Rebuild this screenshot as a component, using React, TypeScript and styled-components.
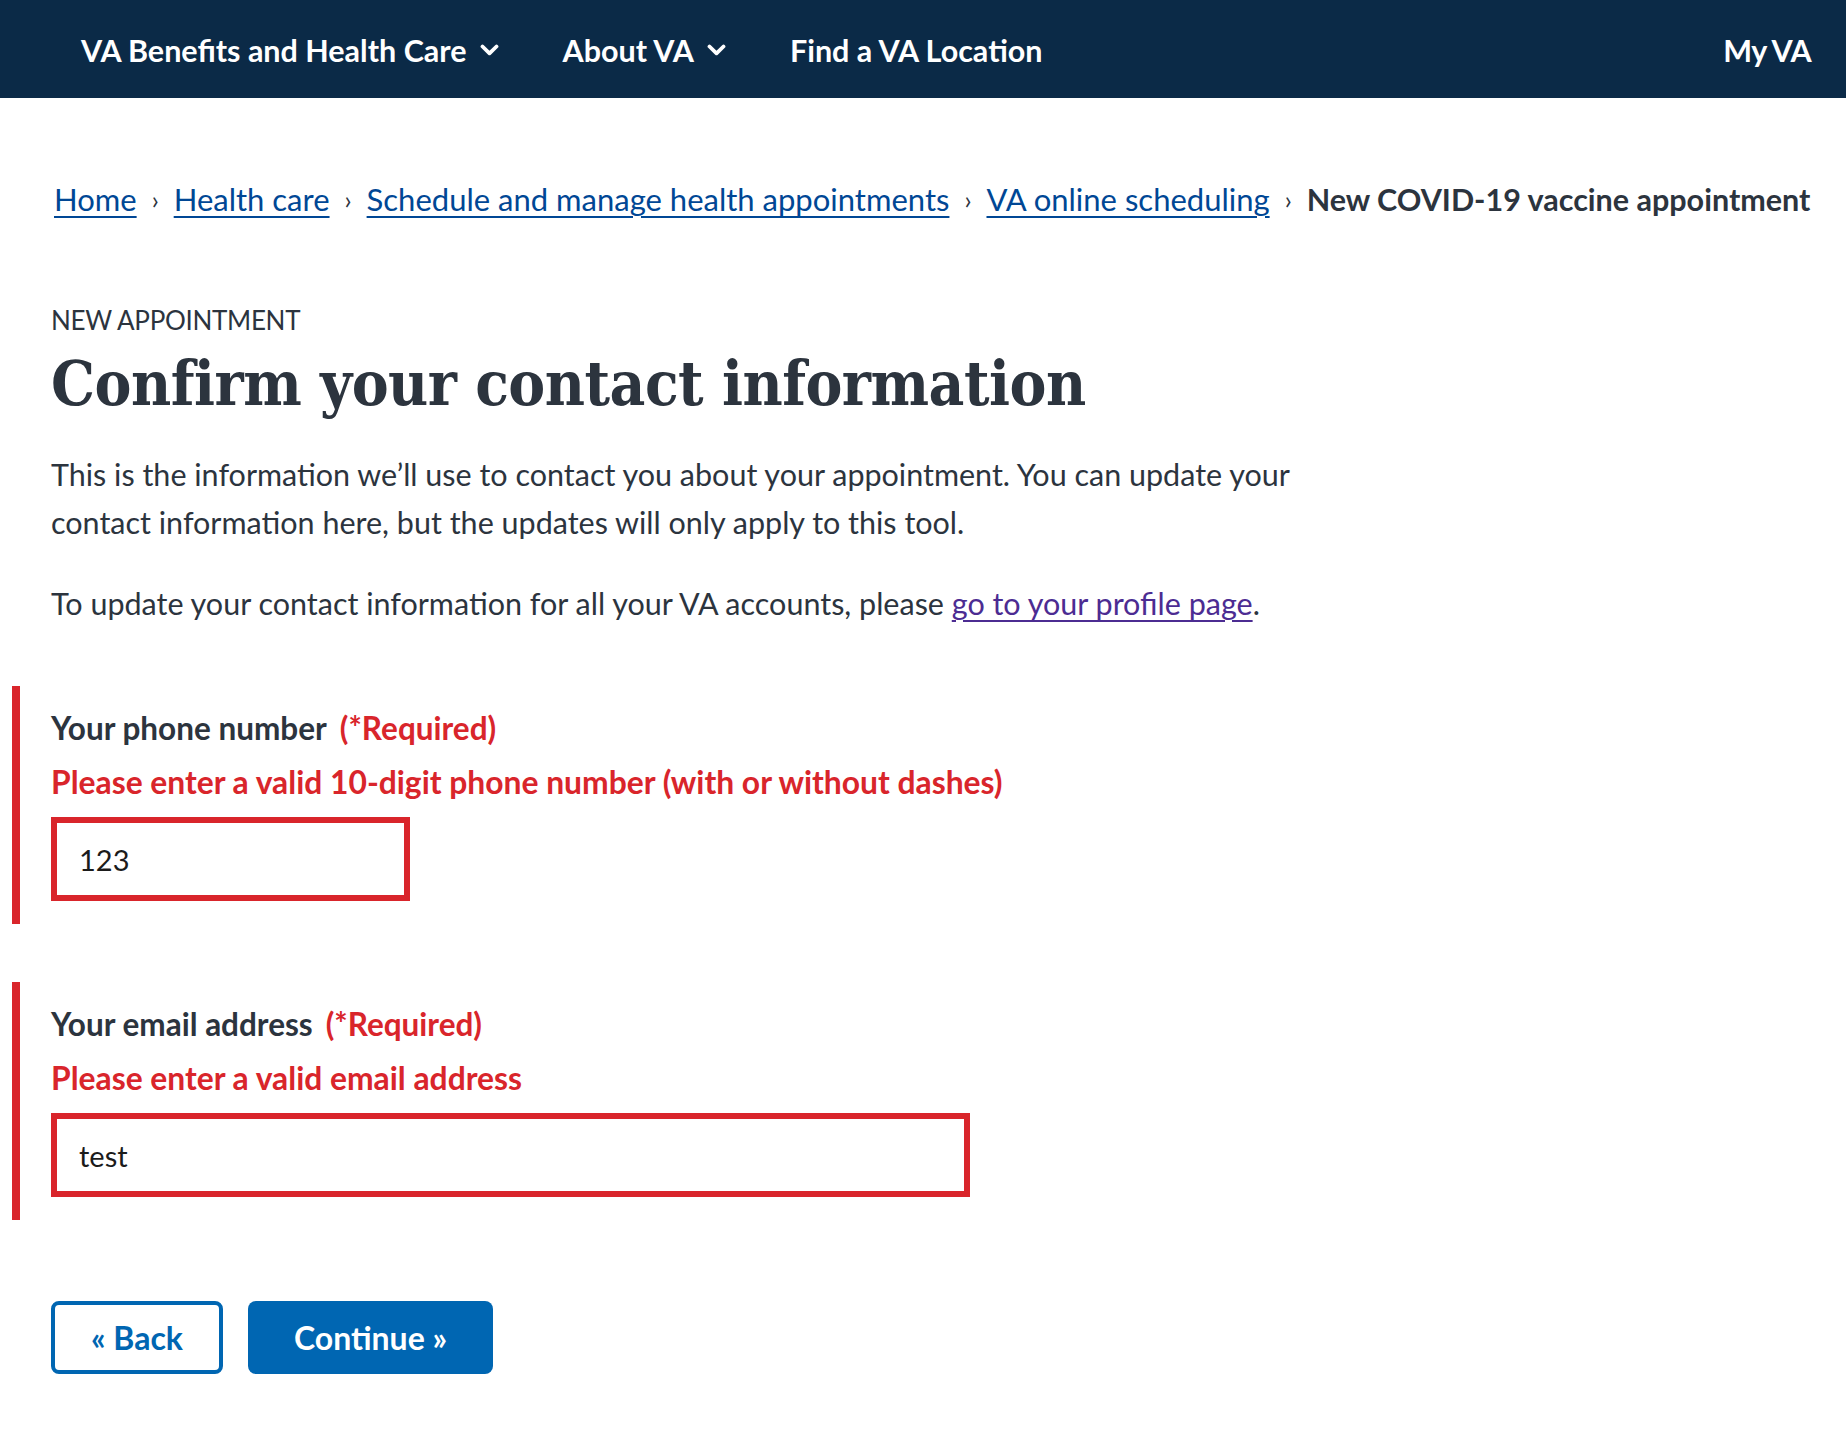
import React from "react";
import styled, { createGlobalStyle } from "styled-components";

const Global = createGlobalStyle`
  html, body { margin: 0; padding: 0; background: #fff; }
  body { font-family: "Lato", "Open Sans", sans-serif; color: #2c343e; }
  * { box-sizing: border-box; }
`;

const Header = styled.header`
  height: 98px;
  background: #0b2a47;
  display: flex;
  align-items: center;
  justify-content: space-between;
  padding: 2px 35px 0 81px;
`;

const Nav = styled.nav`
  display: flex;
  align-items: center;
  gap: 64px;
`;

const NavItem = styled.span<{ $tight?: boolean }>`
  display: inline-flex;
  align-items: center;
  gap: 13px;
  color: #fff;
  font-weight: 700;
  font-size: 30.5px;
  letter-spacing: ${(p) => (p.$tight ? "-0.6px" : "0")};
  white-space: nowrap;
`;

const Chevron = () => (
  <svg width="19" height="12" viewBox="0 0 19 12" aria-hidden="true">
    <path d="M2.5 2.5 L9.5 9.3 L16.5 2.5" fill="none" stroke="#fff" strokeWidth="3.8" strokeLinecap="round" strokeLinejoin="round" />
  </svg>
);

const Main = styled.main`
  padding: 0 51px;
`;

const Breadcrumbs = styled.ol`
  list-style: none;
  margin: 77px 0 0 3px;
  padding: 0;
  display: flex;
  align-items: center;
  font-size: 31px;
  line-height: 48px;
  white-space: nowrap;
`;

const Crumb = styled.li`
  display: inline-flex;
  align-items: center;
`;

const Sep = styled.span`
  color: #2c343e;
  font-size: 25px;
  padding: 0 15px;
`;

const CrumbLink = styled.a`
  color: #004795;
  text-decoration: underline;
  text-underline-offset: 5px;
  text-decoration-thickness: 2px;
`;

const Current = styled.span`
  font-weight: 700;
  font-size: 30.5px;
  color: #2c343e;
`;

const Eyebrow = styled.div`
  margin-top: 77px;
  font-size: 26px;
  line-height: 40px;
  color: #2c343e;
  letter-spacing: -0.3px;
`;

const Title = styled.h1`
  margin: 4px 0 0;
  font-family: "DejaVu Serif", serif;
  font-stretch: condensed;
  font-weight: 700;
  font-size: 61.5px;
  line-height: 80px;
  color: #2c343e;
  letter-spacing: -0.5px;
`;

const Para = styled.p<{ $top: number }>`
  margin: ${(p) => p.$top}px 0 0;
  font-size: 30.5px;
  line-height: 48px;
  max-width: 1300px;
`;

const ProfileLink = styled.a`
  color: #4c2c92;
  text-decoration: underline;
  text-underline-offset: 5px;
  text-decoration-thickness: 2px;
`;

const FieldBlock = styled.div<{ $top: number }>`
  margin: ${(p) => p.$top}px 0 0 -39px;
  border-left: 8px solid #d9252b;
  padding: 22px 0 23px 31px;
  display: flex;
  flex-direction: column;
  align-items: flex-start;
`;

const Label = styled.label`
  font-weight: 700;
  font-size: 31.5px;
  line-height: 40px;
  color: #2c343e;
`;

const Required = styled.span`
  color: #d9252b;
  margin-left: 13px;
`;

const ErrorText = styled.div`
  margin-top: 14px;
  font-weight: 700;
  font-size: 31.8px;
  line-height: 40px;
  color: #d9252b;
`;

const Input = styled.input<{ $w: number }>`
  margin-top: 15px;
  width: ${(p) => p.$w}px;
  height: 84px;
  border: 6px solid #d9252b;
  padding: 0 22px;
  font-family: "Lato", sans-serif;
  font-size: 29px;
  color: #1b1b1b;
  background: #fff;
  outline: none;
`;

const Buttons = styled.div`
  margin-top: 81px;
  display: flex;
  gap: 25px;
  padding-bottom: 40px;
`;

const Button = styled.button<{ $primary?: boolean }>`
  height: 73px;
  padding: 0 ${(p) => (p.$primary ? 46 : 36)}px;
  border-radius: 8px;
  font-family: "Lato", sans-serif;
  font-weight: 700;
  font-size: 32px;
  cursor: pointer;
  border: ${(p) => (p.$primary ? "none" : "4px solid #0066b2")};
  background: ${(p) => (p.$primary ? "#0066b2" : "#fff")};
  color: ${(p) => (p.$primary ? "#fff" : "#0066b2")};
`;

export default function App() {
  return (
    <>
      <Global />
      <Header>
        <Nav>
          <NavItem>
            VA Benefits and Health Care <Chevron />
          </NavItem>
          <NavItem>
            About VA <Chevron />
          </NavItem>
          <NavItem>Find a VA Location</NavItem>
        </Nav>
        <NavItem $tight>My VA</NavItem>
      </Header>
      <Main>
        <Breadcrumbs>
          <Crumb>
            <CrumbLink href="#">Home</CrumbLink>
            <Sep>›</Sep>
          </Crumb>
          <Crumb>
            <CrumbLink href="#">Health care</CrumbLink>
            <Sep>›</Sep>
          </Crumb>
          <Crumb>
            <CrumbLink href="#">Schedule and manage health appointments</CrumbLink>
            <Sep>›</Sep>
          </Crumb>
          <Crumb>
            <CrumbLink href="#">VA online scheduling</CrumbLink>
            <Sep>›</Sep>
          </Crumb>
          <Crumb>
            <Current>New COVID-19 vaccine appointment</Current>
          </Crumb>
        </Breadcrumbs>
        <Eyebrow>NEW APPOINTMENT</Eyebrow>
        <Title>Confirm your contact information</Title>
        <Para $top={26}>
          This is the information we’ll use to contact you about your appointment. You can update your
          contact information here, but the updates will only apply to this tool.
        </Para>
        <Para $top={33}>
          To update your contact information for all your VA accounts, please{" "}
          <ProfileLink href="#">go to your profile page</ProfileLink>.
        </Para>
        <FieldBlock $top={59}>
          <Label>
            Your phone number<Required>(*Required)</Required>
          </Label>
          <ErrorText>Please enter a valid 10-digit phone number (with or without dashes)</ErrorText>
          <Input $w={359} defaultValue="123" />
        </FieldBlock>
        <FieldBlock $top={58}>
          <Label>
            Your email address<Required>(*Required)</Required>
          </Label>
          <ErrorText>Please enter a valid email address</ErrorText>
          <Input $w={919} defaultValue="test" />
        </FieldBlock>
        <Buttons>
          <Button>« Back</Button>
          <Button $primary>Continue »</Button>
        </Buttons>
      </Main>
    </>
  );
}
